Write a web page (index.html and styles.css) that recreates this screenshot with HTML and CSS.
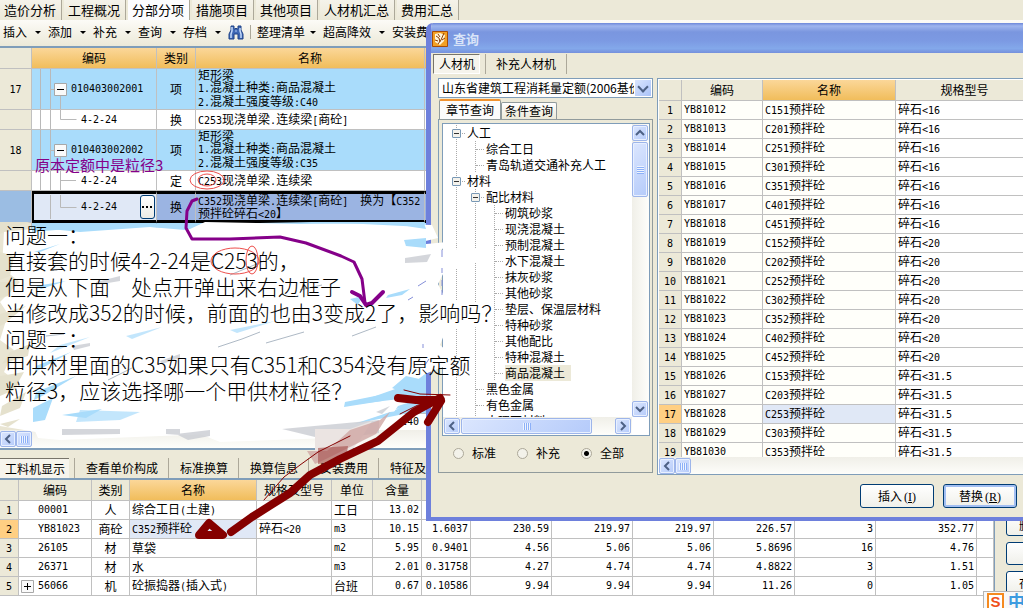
FILE: index.html
```html
<!DOCTYPE html>
<html lang="zh-CN">
<head>
<meta charset="utf-8">
<title>分部分项</title>
<link rel="stylesheet" href="styles.css">
</head>
<body>
<main class="app">
  <nav class="tabs">
    <button>造价分析</button><button>工程概况</button><button class="active">分部分项</button><button>措施项目</button><button>其他项目</button><button>人材机汇总</button><button>费用汇总</button>
  </nav>
  <div class="toolbar">
    <button class="drop">插入</button><button class="drop">添加</button><button class="drop">补充</button><button class="drop">查询</button><button class="drop">存档</button>
    <button class="find" aria-label="查找"><svg width="16" height="15" viewBox="0 0 16 15"><path d="M3 1h3v3h1l1-1 1 1h1V1h3v4l2 4v5h-5V9H6v5H1V9l2-4z" fill="#3f68b5" stroke="#1f4287"/><path d="M4 2v4L3 9v4M12 3v3l1 3v4" fill="none" stroke="#c5dafa" stroke-width="1.5"/><path d="M7 6h2" stroke="#a9c4ef"/></svg></button>
    <i class="sep"></i>
    <button class="drop near">整理清单</button><button class="drop">超高降效</button><button>安装费用</button>
  </div>

  <table class="grid bill">
    <colgroup><col class="w32"><col class="w125"><col class="w39"><col class="w229"><col></colgroup>
    <thead><tr><th class="corner"></th><th>编码</th><th>类别</th><th>名称</th><th></th></tr></thead>
    <tbody>
      <tr class="item"><th><span class="n">17</span></th>
        <td class="code"><div><svg width="36" height="40"><path d="M8.500 0v40M18.500 0v40M18 20.500h5M28.500 26v14" class="guide"/><path d="M22.500 14.500h12v12h-12z" class="box"/><path d="M25 20.500h7" class="sign"/></svg><span class="n">010403002001</span></div></td>
        <td class="mid">项</td><td class="desc">矩形梁<br><span class="n">1.</span>混凝土种类<span class="n">:</span>商品混凝土<br><span class="n">2.</span>混凝土强度等级<span class="n">:C40</span></td><td></td></tr>
      <tr class="sub"><th></th>
        <td class="code"><div><svg width="46" height="19"><path d="M8.500 0v19M18.500 0v19M28.500 0v9.500h16" class="guide"/></svg><span class="n">4-2-24</span></div></td>
        <td class="mid">换</td><td class="desc"><span class="n">C253</span>现浇单梁<span class="n">.</span>连续梁<span class="n">[</span>商砼<span class="n">]</span></td><td></td></tr>
      <tr class="item"><th><span class="n">18</span></th>
        <td class="code"><div><svg width="36" height="40"><path d="M8.500 0v40M18.500 0v40M18 20.500h5M28.500 26v14" class="guide"/><path d="M22.500 14.500h12v12h-12z" class="box"/><path d="M25 20.500h7" class="sign"/></svg><span class="n">010403002002</span></div></td>
        <td class="mid">项</td><td class="desc">矩形梁<br><span class="n">1.</span>混凝土种类<span class="n">:</span>商品混凝土<br><span class="n">2.</span>混凝土强度等级<span class="n">:C35</span></td><td></td></tr>
      <tr class="sub"><th></th>
        <td class="code"><div><svg width="46" height="19"><path d="M8.500 0v19M18.500 0v19M28.500 0v19M28 9.500h16" class="guide"/></svg><span class="n">4-2-24</span></div></td>
        <td class="mid">定</td><td class="desc"><span class="n">C253</span>现浇单梁<span class="n">.</span>连续梁</td><td></td></tr>
      <tr class="picked"><th></th>
        <td class="code"><div><svg width="44" height="24" viewBox="2 0 44 24"><path d="M18.500 0v24M28.500 0v12.500h16" class="guide"/></svg><span class="n">4-2-24</span><button class="more" aria-label="选择"><svg width="11" height="2"><path d="M0 0h2v2H0zM4 0h2v2H4zM8 0h2v2H8z"/></svg></button></div></td>
        <td class="mid">换</td><td class="desc"><span class="n">C352</span>现浇单梁<span class="n">.</span>连续梁<span class="n">[</span>商砼<span class="n">]</span>　换为【<span class="n">C352</span><br>预拌砼碎石<span class="n">&lt;20</span>】</td><td></td></tr>
    </tbody>
  </table>
  <div class="blank"><i></i><b></b></div>
  <div class="lastrow"><i></i><span class="n">C40</span></div>
  <div class="hbar"><button class="sb" aria-label="向左"><svg width="8" height="10"><path d="M6 1L2 5l4 4" class="chev"/></svg></button><span class="sb grip"></span></div>

  <nav class="subtabs">
    <button class="active">工料机显示</button><button>查看单价构成</button><button>标准换算</button><button>换算信息</button><button>安装费用</button><button>特征及内容</button>
  </nav>
  <div class="lower">
    <table class="grid parts">
      <colgroup><col class="w19"><col class="w73"><col class="w38"><col class="w127"><col class="w75"><col class="w41"><col class="w49"><col class="w49"><col class="w81"><col class="w81"><col class="w81"><col class="w81"><col class="w81"><col class="w101"><col></colgroup>
      <thead><tr><th></th><th>编码</th><th>类别</th><th class="hot">名称</th><th>规格及型号</th><th>单位</th><th>含量</th><th></th><th></th><th></th><th></th><th></th><th></th><th></th><th></th></tr></thead>
      <tbody>
        <tr><th><span class="n">1</span></th><td class="key n">00001</td><td class="mid">人</td><td>综合工日<span class="n">(</span>土建<span class="n">)</span></td><td></td><td>工日</td><td class="num">13.02</td><td></td><td></td><td></td><td></td><td></td><td></td><td></td><td></td></tr>
        <tr><th class="on"><span class="n">2</span></th><td class="key n">YB81023</td><td class="mid">商砼</td><td class="sel"><span class="n">C352</span>预拌砼</td><td>碎石<span class="n">&lt;20</span></td><td class="n">m3</td><td class="num">10.15</td><td class="num">1.6037</td><td class="num">230.59</td><td class="num">219.97</td><td class="num">219.97</td><td class="num">226.57</td><td class="num">3</td><td class="num">352.77</td><td></td></tr>
        <tr><th><span class="n">3</span></th><td class="key n">26105</td><td class="mid">材</td><td>草袋</td><td></td><td class="n">m2</td><td class="num">5.95</td><td class="num">0.9401</td><td class="num">4.56</td><td class="num">5.06</td><td class="num">5.06</td><td class="num">5.8696</td><td class="num">16</td><td class="num">4.76</td><td></td></tr>
        <tr><th><span class="n">4</span></th><td class="key n">26371</td><td class="mid">材</td><td>水</td><td></td><td class="n">m3</td><td class="num">2.01</td><td class="num">0.31758</td><td class="num">4.27</td><td class="num">4.74</td><td class="num">4.74</td><td class="num">4.8822</td><td class="num">3</td><td class="num">1.51</td><td></td></tr>
        <tr><th><span class="n">5</span></th><td class="exp"><div><svg width="13" height="13"><path d="M.5.5h12v12H.5z" class="box"/><path d="M3 6.500h7M6.500 3v7" class="sign"/></svg><span class="n">56066</span></div></td><td class="mid">机</td><td>砼振捣器<span class="n">(</span>插入式<span class="n">)</span></td><td></td><td>台班</td><td class="num">0.67</td><td class="num">0.10586</td><td class="num">9.94</td><td class="num">9.94</td><td class="num">9.94</td><td class="num">11.26</td><td class="num">0</td><td class="num">1.05</td><td></td></tr>
      </tbody>
    </table>
    <aside class="side"><button>删除</button><button aria-label="操作"></button><button>存档</button></aside>
  </div>
</main>

<section class="dialog" role="dialog" aria-label="查询">
  <header><svg width="16" height="16"><path d="M.5.500h15v15H.5z" fill="#f2a024" stroke="#a64b08"/><path d="M3 3l5-1 5 2-1 6-4 4-5-3z" fill="#fff6da"/><path d="M4 5l3 2 1 4M6 3l2 3M12 2l-3 7-3 4M3 9l3 1M10 9l3-2" fill="none" stroke="#8d3d05"/></svg><h1>查询</h1></header>
  <nav class="kinds"><button class="active">人材机</button><button>补充人材机</button></nav>
  <div class="panes">
    <div class="left">
      <select class="combo" aria-label="定额库"><option>山东省建筑工程消耗量定额(2006基价)</option></select>
      <nav class="pages"><button class="active">章节查询</button><button>条件查询</button></nav>
      <div class="page">
        <div class="treebox">
          <ul class="tree">
            <li class="first"><p><i class="pm"></i><i class="tk s"></i>人工</p>
              <ul><li><p><i class="tk"></i>综合工日</p></li><li class="last"><p><i class="tk"></i>青岛轨道交通补充人工</p></li></ul></li>
            <li><p><i class="pm"></i><i class="tk s"></i>材料</p>
              <ul>
                <li><p><i class="pm"></i><i class="tk s"></i>配比材料</p>
                  <ul><li><p><i class="tk"></i>砌筑砂浆</p></li><li><p><i class="tk"></i>现浇混凝土</p></li><li><p><i class="tk"></i>预制混凝土</p></li><li><p><i class="tk"></i>水下混凝土</p></li><li><p><i class="tk"></i>抹灰砂浆</p></li><li><p><i class="tk"></i>其他砂浆</p></li><li><p><i class="tk"></i>垫层、保温层材料</p></li><li><p><i class="tk"></i>特种砂浆</p></li><li><p><i class="tk"></i>其他配比</p></li><li><p><i class="tk"></i>特种混凝土</p></li><li class="last"><p><i class="tk"></i><b>商品混凝土</b></p></li></ul></li>
                <li><p><i class="tk"></i>黑色金属</p></li><li><p><i class="tk"></i>有色金属</p></li><li><p><i class="tk"></i>大理石材料</p></li>
              </ul></li>
          </ul>
          <div class="vbar"><button class="sb" aria-label="向上"><svg width="10" height="8"><path d="M1 6l4-4 4 4" class="chev"/></svg></button><span class="sb vthumb"></span><button class="sb end" aria-label="向下"><svg width="10" height="8"><path d="M1 2l4 4 4-4" class="chev"/></svg></button></div>
          <div class="tbar"><button class="sb" aria-label="向左"><svg width="8" height="10"><path d="M6 1L2 5l4 4" class="chev"/></svg></button><span class="sb grip long"></span><button class="sb end" aria-label="向右"><svg width="8" height="10"><path d="M2 1l4 4-4 4" class="chev"/></svg></button></div>
        </div>
        <div class="radios"><label><input type="radio" name="scope">标准</label><label><input type="radio" name="scope">补充</label><label><input type="radio" name="scope" checked>全部</label></div>
      </div>
    </div>
    <div class="result">
      <div class="clip">
      <table class="grid list">
        <colgroup><col class="w23"><col class="w81"><col class="w133"><col></colgroup>
        <thead><tr><th></th><th>编码</th><th class="hot">名称</th><th>规格型号</th></tr></thead>
        <tbody>
          <tr><th><span class="n">1</span></th><td class="n">YB81012</td><td><span class="n">C151</span>预拌砼</td><td>碎石<span class="n">&lt;16</span></td></tr>
          <tr><th><span class="n">2</span></th><td class="n">YB81013</td><td><span class="n">C201</span>预拌砼</td><td>碎石<span class="n">&lt;16</span></td></tr>
          <tr><th><span class="n">3</span></th><td class="n">YB81014</td><td><span class="n">C251</span>预拌砼</td><td>碎石<span class="n">&lt;16</span></td></tr>
          <tr><th><span class="n">4</span></th><td class="n">YB81015</td><td><span class="n">C301</span>预拌砼</td><td>碎石<span class="n">&lt;16</span></td></tr>
          <tr><th><span class="n">5</span></th><td class="n">YB81016</td><td><span class="n">C351</span>预拌砼</td><td>碎石<span class="n">&lt;16</span></td></tr>
          <tr><th><span class="n">6</span></th><td class="n">YB81017</td><td><span class="n">C401</span>预拌砼</td><td>碎石<span class="n">&lt;16</span></td></tr>
          <tr><th><span class="n">7</span></th><td class="n">YB81018</td><td><span class="n">C451</span>预拌砼</td><td>碎石<span class="n">&lt;16</span></td></tr>
          <tr><th><span class="n">8</span></th><td class="n">YB81019</td><td><span class="n">C152</span>预拌砼</td><td>碎石<span class="n">&lt;20</span></td></tr>
          <tr><th><span class="n">9</span></th><td class="n">YB81020</td><td><span class="n">C202</span>预拌砼</td><td>碎石<span class="n">&lt;20</span></td></tr>
          <tr><th><span class="n">10</span></th><td class="n">YB81021</td><td><span class="n">C252</span>预拌砼</td><td>碎石<span class="n">&lt;20</span></td></tr>
          <tr><th><span class="n">11</span></th><td class="n">YB81022</td><td><span class="n">C302</span>预拌砼</td><td>碎石<span class="n">&lt;20</span></td></tr>
          <tr><th><span class="n">12</span></th><td class="n">YB81023</td><td><span class="n">C352</span>预拌砼</td><td>碎石<span class="n">&lt;20</span></td></tr>
          <tr><th><span class="n">13</span></th><td class="n">YB81024</td><td><span class="n">C402</span>预拌砼</td><td>碎石<span class="n">&lt;20</span></td></tr>
          <tr><th><span class="n">14</span></th><td class="n">YB81025</td><td><span class="n">C452</span>预拌砼</td><td>碎石<span class="n">&lt;20</span></td></tr>
          <tr><th><span class="n">15</span></th><td class="n">YB81026</td><td><span class="n">C153</span>预拌砼</td><td>碎石<span class="n">&lt;31.5</span></td></tr>
          <tr><th><span class="n">16</span></th><td class="n">YB81027</td><td><span class="n">C203</span>预拌砼</td><td>碎石<span class="n">&lt;31.5</span></td></tr>
          <tr><th class="on"><span class="n">17</span></th><td class="n">YB81028</td><td class="sel"><span class="n">C253</span>预拌砼</td><td>碎石<span class="n">&lt;31.5</span></td></tr>
          <tr><th><span class="n">18</span></th><td class="n">YB81029</td><td><span class="n">C303</span>预拌砼</td><td>碎石<span class="n">&lt;31.5</span></td></tr>
          <tr><th><span class="n">19</span></th><td class="n">YB81030</td><td><span class="n">C353</span>预拌砼</td><td>碎石<span class="n">&lt;31.5</span></td></tr>
        </tbody>
      </table>
      </div>
      <div class="hbar"><button class="sb" aria-label="向左"><svg width="8" height="10"><path d="M6 1L2 5l4 4" class="chev"/></svg></button><span class="sb grip"></span></div>
    </div>
  </div>
  <footer><button>插入<span class="k">(<u>I</u>)</span></button><button class="default">替换<span class="k">(<u>R</u>)</span></button></footer>
</section>

<svg class="ink" width="560" height="608" viewBox="0 0 560 608" aria-hidden="true">
  <g fill="#fff">
    <path d="M4 232L40 228 80 232 150 227 190 229 205 222 300 224 370 223 432 225 438 238 405 246 458 241 440 250 478 248 476 262 444 272 438 284 446 300 480 303 490 326 446 330 440 345 448 352 466 360 440 368 425 374 402 392 398 388 350 405 432 395 398 406 390 418 380 422 340 426 220 432 60 436 0 426 0 395 20 384 4 372 14 350 0 340 8 314 0 302 20 282 2 268z"/>
    <path d="M32 424L380 412 370 430 315 430 60 440 38 438z"/>
    <path d="M200 434l180-20 20-6-70 30-110 4z"/>
  </g>
  <g fill="#a9dcfb">
    <path d="M32 223h50l-14 6-36 3zM140 224h60l-15 6-35-3zM260 222h165l-2 5-60-3zM404 240l22-2v10l-20-2zM372 222l52 1 2 6-34-5zM388 295l22-6-8 6-16 3zM350 299l13-3-5 9zM34 252l26-8-20 8zM36 286l30-5-25 8zM36 366l35-14-36 20zM36 392l40-16-30 18-12 6zM345 402l45-9-8 8-38 6zM392 388l14-12 18 4v28l-34 4-36 12 50-10 24-12zM33 408l20-10-8 22-12 2zM62 415l40-6-16 9z"/>
    <path d="M80 410l60 2-20 8-44 2zM60 345l30-8-40 16zM126 336l36-9-30 12zM230 330l45-9-38 12z" opacity=".7"/>
  </g>
  <g fill="#e5e1cd">
    <path d="M0 222h30l-22 8-8 4zM0 252l14 4-4 20-10 4zM0 282l16 0-8 14-8 2zM0 314l26-8-22 18-4 2zM10 352l20-8-2 12-26 8zM0 376l24-4-10 18-14 6zM2 406l24-14-6 16-20 8zM0 424l20-5-12 8z"/>
  </g>
  <g fill="#c9ccd2">
    <path d="M96 282l24-6v5l-24 4zM72 346l18-3v3l-16 4zM160 361l20-7v4l-18 6zM405 258l26-4-4 8-22 1zM166 429h14v6l-14-1zM62 429h58v5l-58 1zM176 434l34-4v6l-22 4zM282 429l97-9v13l-14 2-50 2zM376 412l14-6-8 8z" opacity=".8"/>
  </g>
  <g stroke="#aeb9c5" fill="none"><path d="M266 343l38-11M218 347l24-8 18-7M108 380l24-12M300 290l22-5M230 275l34-14M352 336l24-9M46 336l18-2"/><path d="M408 300l5-3M418 286l8-5M423 344v4M442 250v7M442 268v5M442 280v6M442 290v5M425 365l4-6" stroke="#858fd9"/></g>
  <path d="M315 429h35l22-8-12 19-15 18-30-2z" fill="#ebe4e2"/><path d="M350 430l30-10 10-8-14 22-50 25-11 5-8-13h20z" fill="#cfa6a4" opacity=".8"/><path d="M318 448l30-2-2 14-28 4z" fill="#a34b4a" opacity=".6"/>
  <g fill="none" stroke="#850089" stroke-width="3" stroke-linecap="round" stroke-linejoin="round"><path d="M197 199l-5 2-5 10-1 17 6 11h38l50-2 26 6 35 13 13 6 8 17 3 24"/><path d="M352 292l8 4 6 9 6-2 11-11" stroke-width="4"/></g>
  <g fill="none" stroke="#850000" stroke-linecap="round" stroke-linejoin="round"><path d="M199 535l10-12 14 12z" stroke-width="8"/><path d="M231 532l21-15 38-24 20-18 30-16 38-18 20-16 16-13 26-14M398 398l18 2h25M441 401l-13 21" stroke-width="8"/><path d="M264 500l20-23 16-12 18-13 32-16M400 414l18-9 22-4M404 390l16 4 30 1" stroke-width="1"/></g>
  <g fill="none" stroke="#ed4f4c"><ellipse cx="207" cy="180" rx="17" ry="9"/><ellipse cx="207" cy="180" rx="9" ry="6"/><ellipse cx="235" cy="261" rx="24" ry="13"/><ellipse cx="252" cy="260" rx="6" ry="14"/></g>
</svg>
<p class="tag">原本定额中是粒径3</p>
<p class="note">问题一：<br>直接套的时候4-2-24是C253的，<br>但是从下面　处点开弹出来右边框子<br>当修改成352的时候，前面的也由3变成2了，影响吗？<br>问题二：<br>甲供材里面的C35如果只有C351和C354没有原定额<br>粒径3，应该选择哪一个甲供材粒径？</p>
<div class="ime"><b>S</b><span>中</span></div>
</body>
</html>
```
FILE: styles.css
```css
* { box-sizing: border-box; }
body { margin: 0; height: 608px; position: relative; overflow: hidden; background: #fff; color: #000; font: 12px/16px "Noto Sans CJK SC", sans-serif; }
button, select { font: inherit; color: inherit; border: 0; padding: 0; background: none; border-radius: 0; white-space: nowrap; }
i, b, h1 { font-style: normal; font-weight: normal; }
p, h1, ul { margin: 0; padding: 0; list-style: none; }
.n, .num { font-family: "DejaVu Sans Mono", monospace; font-size: 10px; }

.tabs { display: flex; height: 20px; background: #ece9d8; }
.tabs button { height: 20px; padding: 0 5px 0 4px; font-size: 13px; line-height: 18px; border-right: 1px solid #aca899; margin-right: 2px; background: linear-gradient(#f5f3ea, #ece9d8); }
.tabs button.active { background: #fcfcfe; line-height: 16px; }
.toolbar { display: flex; align-items: center; height: 28px; padding: 0 0 2px 3px; background: linear-gradient(#fcfbf7, #ece9d8); border-bottom: 2px solid #7f9db9; }
.drop { display: flex; align-items: center; }
.drop::after { content: ""; border: 3px solid transparent; border-top-color: #000; border-bottom: 0; margin: 0 7px 0 8px; }
.drop.near::after { margin-left: 5px; }
.find { display: flex; margin-right: 6px; }
.sep { width: 1px; height: 14px; background: #aca899; margin-right: 6px; }

.grid { width: 100%; table-layout: fixed; border-spacing: 0; }
.grid th, .grid td { padding: 0 1px 0 2px; border-right: 1px solid #c0c0c0; border-bottom: 1px solid #c0c0c0; overflow: hidden; white-space: nowrap; height: 19px; line-height: 16px; font-weight: normal; text-align: left; }
.grid th { background: #ece9d8; text-align: center; padding: 0; }
.grid thead th { height: 21px; }
.grid th.hot, .bill thead th { background: linear-gradient(#fbd799, #f1bd5b); }
.bill thead th.corner { background: #ece9d8; }
.grid th.on { background: #ffcf83; }
.grid td.sel { background: #e0e8f6; }
.grid td.mid { text-align: center; padding: 0; }
.grid td.num { text-align: right; padding-right: 2px; }
.w19 { width: 19px; } .w23 { width: 23px; } .w32 { width: 32px; } .w38 { width: 38px; } .w39 { width: 39px; } .w41 { width: 41px; } .w49 { width: 49px; } .w73 { width: 73px; } .w75 { width: 75px; } .w81 { width: 81px; } .w101 { width: 101px; } .w125 { width: 125px; } .w127 { width: 127px; } .w133 { width: 133px; } .w229 { width: 229px; }

.guide { fill: none; stroke: #b9b9b9; }
.box { fill: #fafafa; stroke: #a8a8a8; }
.sign { fill: none; stroke: #000; }
.bill .item td { background: #a9dcfb; height: 41px; }
.bill .sub td { height: 20px; }
.bill td.desc { line-height: 12px; }
.bill td.code { padding: 0; }
.code div { display: flex; align-items: center; }
.code svg { flex: none; margin-right: 3px; }
.bill .picked th { background: #9bbde3; height: 30px; }
.bill .picked td { background: #9bb4e2; height: 30px; border-top: 3px solid #000; border-bottom: 3px solid #000; }
.bill .picked td.desc .n { line-height: 10px; }
.bill .picked td.code { background: #e0e8f6; border-left: 2px solid #000; }
.code .more { display: flex; align-items: center; justify-content: center; width: 15px; height: 24px; margin-left: auto; margin-right: 1px; border: 1px solid #003c74; border-radius: 3px; background: linear-gradient(#fff, #ecebe6); }
.code .more svg { margin: 0; }
.blank { display: flex; height: 190px; background: #a9dcfb; }
.blank i, .lastrow i { width: 32px; background: #e9e5d3; border-right: 1px solid #c0c0c0; }
.blank b { width: 125px; border-right: 1px solid #91c1e0; }
.lastrow { display: flex; height: 17px; background: #fff; border-top: 1px solid #c0c0c0; }
.lastrow span { margin-left: 369px; line-height: 16px; }
.hbar { display: flex; height: 18px; padding: 1px 0; background: linear-gradient(#f0efe8, #fefefb); }
.sb { display: flex; align-items: center; justify-content: center; width: 16px; height: 16px; flex: none; border: 1px solid #9db5ea; border-radius: 2px; background: linear-gradient(135deg, #dbe6fe, #b5cbfa); box-shadow: inset 0 0 0 1px #e8f0ff; }
.chev { fill: none; stroke: #4d6185; stroke-width: 2; }
.grip::after { content: ""; width: 8px; height: 7px; background: repeating-linear-gradient(90deg, #eef4fe 0 1px, #8cb0f8 1px 2px); }

.subtabs { display: flex; height: 32px; padding-top: 8px; background: #ece9d8; border-top: 2px solid #7f9db9; border-bottom: 2px solid #7f9db9; }
.subtabs button { height: 20px; padding: 0 10px 0 11px; border-right: 1px solid #aca899; flex: none; }
.subtabs button.active { padding: 0 4px 0 5px; background: #f6f4ec; border: 0; border-top: 1px solid #77746a; margin-right: 5px; }
.subtabs button.active + button { border-left: 1px solid #aca899; }
.lower { display: flex; align-items: flex-start; }
.parts { flex: 1; width: 0; }
.parts td.key { padding-left: 19px; }
.parts td.exp { padding: 0 0 0 2px; }
.exp div { display: flex; align-items: center; gap: 4px; }
.side { width: 29px; height: 129px; border-left: 1px solid #7f9db9; background: #ece9d8; padding: 33px 0 0 11px; overflow: hidden; }
.side button { display: block; width: 74px; height: 23px; margin-bottom: 6px; text-align: left; padding-left: 12px; }
.side button, footer button { border: 1px solid #003c74; border-radius: 3px; background: linear-gradient(#fff, #f0f0ea); }

.dialog { position: absolute; left: 426px; right: 0; top: 23px; height: 498px; display: flex; flex-direction: column; background: #ece9d8; border: solid #6e80dc; border-width: 0 0 4px 5px; border-radius: 7px 0 0 0; overflow: hidden; }
.dialog header { display: flex; align-items: center; gap: 5px; height: 30px; padding: 2px 0 0 1px; background: linear-gradient(#6d87d9, #9eb5ee 3px, #7a96df 9px, #7c9ae3 60%, #83a8ea 85%, #7590dc); }
.dialog header h1 { color: #d9e4f8; font-size: 13px; font-weight: bold; }
.kinds { display: flex; height: 25px; padding: 1px 0 4px 2px; }
.kinds button { padding: 0 10px; border-right: 1px solid #aca899; }
.kinds .active { width: 47px; padding: 0 5px; background: #f6f4ec; border: 1px solid #fff; border-top-color: #77746a; border-left-color: #77746a; margin-right: 5px; }
.kinds .active + button { border-left: 1px solid #aca899; }
.panes { display: flex; gap: 4px; padding-left: 7px; height: 397px; }
.left { position: relative; width: 215px; flex: none; display: flex; flex-direction: column; padding-bottom: 2px; }
.combo { width: 215px; height: 20px; border: 1px solid #7f9db9; appearance: none; padding-left: 3px; padding-right: 18px; background: linear-gradient(135deg, #dbe6fe, #a9c2f8) right 1px center / 16px 16px no-repeat #fff; line-height: 18px; }
.left::before { content: ""; position: absolute; z-index: 1; right: 6px; top: 5px; width: 6px; height: 6px; border: solid #4d6185; border-width: 0 2px 2px 0; transform: rotate(45deg); pointer-events: none; }
.pages { display: flex; align-items: flex-end; height: 21px; padding-left: 1px; }
.pages button { height: 17px; width: 56px; border: 1px solid #919b9c; border-bottom: 0; border-radius: 2px 2px 0 0; background: linear-gradient(#fff, #ece9d8); }
.pages .active { width: 62px; height: 20px; border-top: 2px solid #f2932f; background: #fcfcfb; line-height: 16px; }
.page { flex: 1; display: flex; flex-direction: column; padding: 3px 2px 0 4px; border: 1px solid #919b9c; border-left-color: #7f9db9; }
.treebox { display: grid; grid-template: 293px 18px / 1fr 17px; height: 313px; border: 1px solid #7f9db9; background: #fff; margin-left: -1px; }
.tree { overflow: hidden; padding: 1px 0 0 4px; }
.tree ul { padding-left: 19px; }
.tree li { background: linear-gradient(#aaa 50%, transparent 50%) 9px 0 / 1px 2px repeat-y; }
.tree p { display: flex; align-items: center; height: 16px; white-space: nowrap; }
.pm { width: 9px; height: 9px; margin-left: 5px; margin-right: 1px; border: 1px solid #7898b5; border-radius: 1px; background: linear-gradient(#333, #333) center / 5px 1px no-repeat #f4f2ec; }
.tk { width: 8px; margin: 0 2px 0 10px; border-top: 1px dotted #aaa; }
.tk.s { width: 3px; margin-left: 0; }
.tree b { background: #ece9d8; padding-right: 6px; }
.vbar { display: flex; flex-direction: column; padding-top: 1px; background: linear-gradient(90deg, #f0efe8, #fefefb); }
.vthumb { height: 55px; margin-top: 1px; }
.vthumb::after { content: ""; width: 7px; height: 8px; background: repeating-linear-gradient(#eef4fe 0 1px, #8cb0f8 1px 2px); }
.vbar .end { margin-top: auto; }
.tbar { display: flex; padding: 1px; background: linear-gradient(#f0efe8, #fefefb); }
.long { width: 131px; margin-left: 1px; }
.tbar .end { margin-left: auto; }
.radios { display: flex; gap: 16px; padding: 9px 0 0 10px; }
.radios label { display: flex; align-items: center; width: 48px; gap: 8px; white-space: nowrap; }
.radios input { appearance: none; flex: none; width: 11px; height: 11px; margin: 0; border: 1px solid #aca899; border-radius: 50%; background: #f3f2ea; }
.radios input:checked { background: radial-gradient(circle, #000 0 2px, #f3f2ea 3px); }
.result { flex: 1; border: solid #7f9db9; border-width: 1px 0 1px 1px; padding: 1px 0 0 1px; background: #fff; overflow: hidden; }
.clip { height: 377px; overflow: hidden; }
.list td:nth-child(2), .list td:nth-child(3) { background: #fffffa; }
.list td.sel:nth-child(3) { background: #e0e8f6; }
.list { width: calc(100% + 11px); }
.dialog footer { display: flex; justify-content: flex-end; gap: 9px; padding: 9px 6px 0 0; }
.dialog footer button { width: 74px; height: 24px; }
.dialog footer .default { box-shadow: inset 0 0 0 2px #a3bff2; }
.k { font-family: "Liberation Serif", serif; margin-left: 2px; }

.ink { position: absolute; left: 0; top: 0; pointer-events: none; }
.tag { position: absolute; left: 35px; top: 156px; font-size: 15px; line-height: 18px; color: #850089; }
.note { position: absolute; left: 5px; top: 221px; font-size: 21px; line-height: 26px; white-space: nowrap; font-weight: 300; font-family: "Noto Sans CJK SC", sans-serif; }
.ime { position: absolute; right: 0; bottom: 0; display: flex; gap: 4px; width: 40px; height: 17px; padding: 1px 0 0 3px; overflow: hidden; background: #f8f8f8; border: solid #b5b5b5; border-width: 1px 0 0 1px; }
.ime b { flex: none; width: 17px; height: 17px; border: 2px solid #f58a1f; background: #fff; color: #f0501b; font: bold 15px/13px "Liberation Sans", sans-serif; text-align: center; }
.ime span { flex: none; font-size: 17px; line-height: 16px; font-weight: bold; color: #3d9be0; }
```
